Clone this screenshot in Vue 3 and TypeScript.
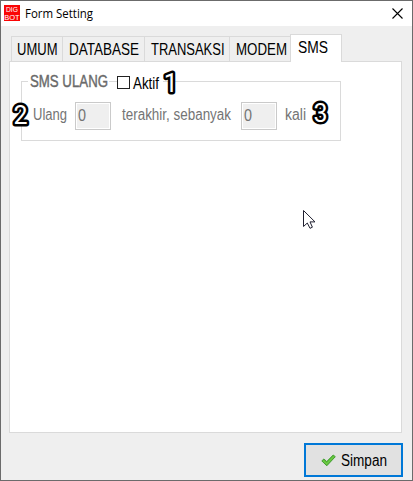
<script setup lang="ts">
import { h } from 'vue'

interface LabelProps {
  text: string
  width: number
  color?: string
  weight?: number
}

// Condensed dialog label: real text squeezed to a given advance width.
const DialogLabel = (props: LabelProps) =>
  h('svg', { width: props.width, height: 18, style: { display: 'block', overflow: 'visible', flex: 'none' } }, [
    h(
      'text',
      {
        x: 0,
        y: 14,
        textLength: props.width,
        lengthAdjust: 'spacingAndGlyphs',
        fill: props.color ?? '#000',
        stroke: props.weight ? props.color : 'none',
        'stroke-width': props.weight ?? 0,
      },
      props.text,
    ),
  ])
DialogLabel.props = ['text', 'width', 'color', 'weight']

const tabs = [
  { text: 'UMUM', width: 40.5, cls: 'umum' },
  { text: 'DATABASE', width: 70, cls: 'database' },
  { text: 'TRANSAKSI', width: 73.5, cls: 'transaksi' },
  { text: 'MODEM', width: 51, cls: 'modem' },
  { text: 'SMS', width: 30, cls: 'active' },
]
</script>

<template>
  <div class="window">
    <header class="titlebar">
      <svg class="logo" width="16" height="16" viewBox="0 0 16 16">
        <rect width="16" height="16" fill="#fa0505" />
        <text x="2" y="7" textLength="12" lengthAdjust="spacingAndGlyphs">DIG</text>
        <text x="0.3" y="14.6" textLength="15.4" lengthAdjust="spacingAndGlyphs">BOT</text>
      </svg>
      <svg class="title" width="68" height="18">
        <text x="0" y="13" textLength="68" lengthAdjust="spacingAndGlyphs">Form Setting</text>
      </svg>
      <svg class="close" width="11" height="11" viewBox="0 0 11 11">
        <path d="M.5 .5 10.5 10.5M10.5 .5 .5 10.5" stroke="#000" stroke-width="1.1" />
      </svg>
    </header>
    <nav class="tabs">
      <div v-for="t in tabs" :key="t.text" class="tab" :class="t.cls">
        <DialogLabel :text="t.text" :width="t.width" />
      </div>
    </nav>
    <main class="panel">
      <section class="group">
        <div class="legend">
          <span class="caption"><DialogLabel text="SMS ULANG" :width="78" color="#6a6a6a" :weight="0.4" /></span>
          <span class="checkbox"></span>
          <span class="aktif"><DialogLabel text="Aktif" :width="26" /></span>
        </div>
        <div class="fields">
          <DialogLabel text="Ulang" :width="34" color="#747474" />
          <div class="box first"><DialogLabel text="0" :width="8" color="#747474" /></div>
          <DialogLabel text="terakhir, sebanyak" :width="109" color="#747474" />
          <div class="box second"><DialogLabel text="0" :width="8" color="#747474" /></div>
          <DialogLabel text="kali" :width="21" color="#747474" />
        </div>
      </section>
    </main>
    <footer class="actions">
      <button class="save" type="button">
        <svg class="check" width="15" height="13" viewBox="0 0 15 13">
          <path d="M.8 6.9 3 4.9 5.7 7.6 12.2 1 14.3 2.7 5.8 11.8Z" fill="#5bbd35" stroke="#3a982b" stroke-width=".9" stroke-linejoin="round" />
          <path d="M2 6.8 5.7 9.8 13 2.4" fill="none" stroke="#82d456" stroke-width=".8" />
        </svg>
        <DialogLabel text="Simpan" :width="46" />
      </button>
    </footer>
    <svg class="overlay" width="413" height="481">
      <g class="mark">
        <text x="163.8" y="92">1</text>
        <text x="13.4" y="123.5">2</text>
        <text x="313.4" y="122.3">3</text>
      </g>
      <path d="M303.5 210.5V226.5L307.3 223 310 228.3 312.4 227.2 310 221.9H315Z" fill="#fff" stroke="#202030" stroke-width="1" />
    </svg>
  </div>
</template>

<style>
body { margin: 0; }
</style>

<style scoped>
.window {
  box-sizing: border-box;
  position: relative;
  width: 413px;
  height: 481px;
  border: 1px solid #6b6b6b;
  background: #efefef;
  font-family: "Liberation Sans", Arial, sans-serif;
  font-size: 16px;
  overflow: hidden;
}
.titlebar {
  display: flex;
  box-sizing: border-box;
  height: 25px;
  padding: 4px 9px 0 3px;
  background: #fff;
}
.logo text { font-size: 6.6px; fill: #fff; }
.title {
  margin-left: 5px;
  overflow: visible;
  font-family: "Open Sans", "Noto Sans", sans-serif;
  font-size: 12px;
}
.close { margin: 3px 0 0 auto; }
.tabs {
  position: relative;
  z-index: 1;
  display: flex;
  align-items: flex-end;
  height: 36px;
  padding-left: 10px;
}
.tab {
  box-sizing: border-box;
  height: 26px;
  border: 1px solid #dadada;
  border-right: 0;
  padding: 4px 0 0 5px;
}
.umum { width: 51px; }
.database { width: 82px; padding-left: 6px; }
.transaksi { width: 85px; padding-left: 6px; }
.modem { width: 61px; padding-left: 6px; }
.active {
  width: 52px;
  height: 28px;
  padding: 4px 0 0 7px;
  background: #fff;
  border-right: 1px solid #dadada;
  border-bottom: 0;
}
.panel {
  box-sizing: border-box;
  width: 393px;
  height: 372px;
  margin-left: 8px;
  margin-top: -1px;
  padding: 19px 0 0 11px;
  border: 1px solid #dadada;
  background: #fff;
}
.group {
  box-sizing: border-box;
  width: 320px;
  height: 60px;
  border: 1px solid #dadada;
}
.legend {
  display: flex;
  align-items: flex-start;
  height: 20px;
  margin-top: -9px;
  padding-left: 6px;
}
.caption {
  width: 79px;
  padding-left: 2px;
  background: #fff;
}
.checkbox {
  box-sizing: border-box;
  width: 13px;
  height: 13px;
  margin: 3px 0 0 8px;
  border: 1px solid #222;
  background: #fff;
}
.aktif {
  margin-top: 2px;
  padding: 0 4px 0 3px;
  background: #fff;
}
.fields {
  display: flex;
  align-items: center;
  height: 28px;
  margin-top: 9px;
  padding-left: 11px;
}
.fields > svg { position: relative; top: -1px; }
.box {
  box-sizing: border-box;
  width: 36px;
  height: 28px;
  border: 1px solid #cacaca;
  box-shadow: inset 0 0 0 1px #fff;
  background: #efefef;
  padding: 4px 0 0 2px;
}
.first { margin: 0 11px 0 8px; }
.second { margin: 0 8px 0 10px; }
.actions {
  display: flex;
  justify-content: flex-end;
  padding: 10px 9px 0 0;
}
.save {
  box-sizing: border-box;
  display: flex;
  align-items: center;
  gap: 5px;
  width: 99px;
  height: 34px;
  padding: 2px 0 0 15px;
  border: 2px solid #0078d7;
  background: #e1e1e1;
  font: inherit;
}
.check { margin-bottom: 2px; }
.overlay {
  position: absolute;
  left: -1px;
  top: -1px;
}
.mark text {
  font-family: Roboto, sans-serif;
  font-weight: 400;
  font-size: 25px;
  fill: #fff;
  stroke: #000;
  stroke-width: 5px;
  stroke-linejoin: round;
  paint-order: stroke;
}
</style>
